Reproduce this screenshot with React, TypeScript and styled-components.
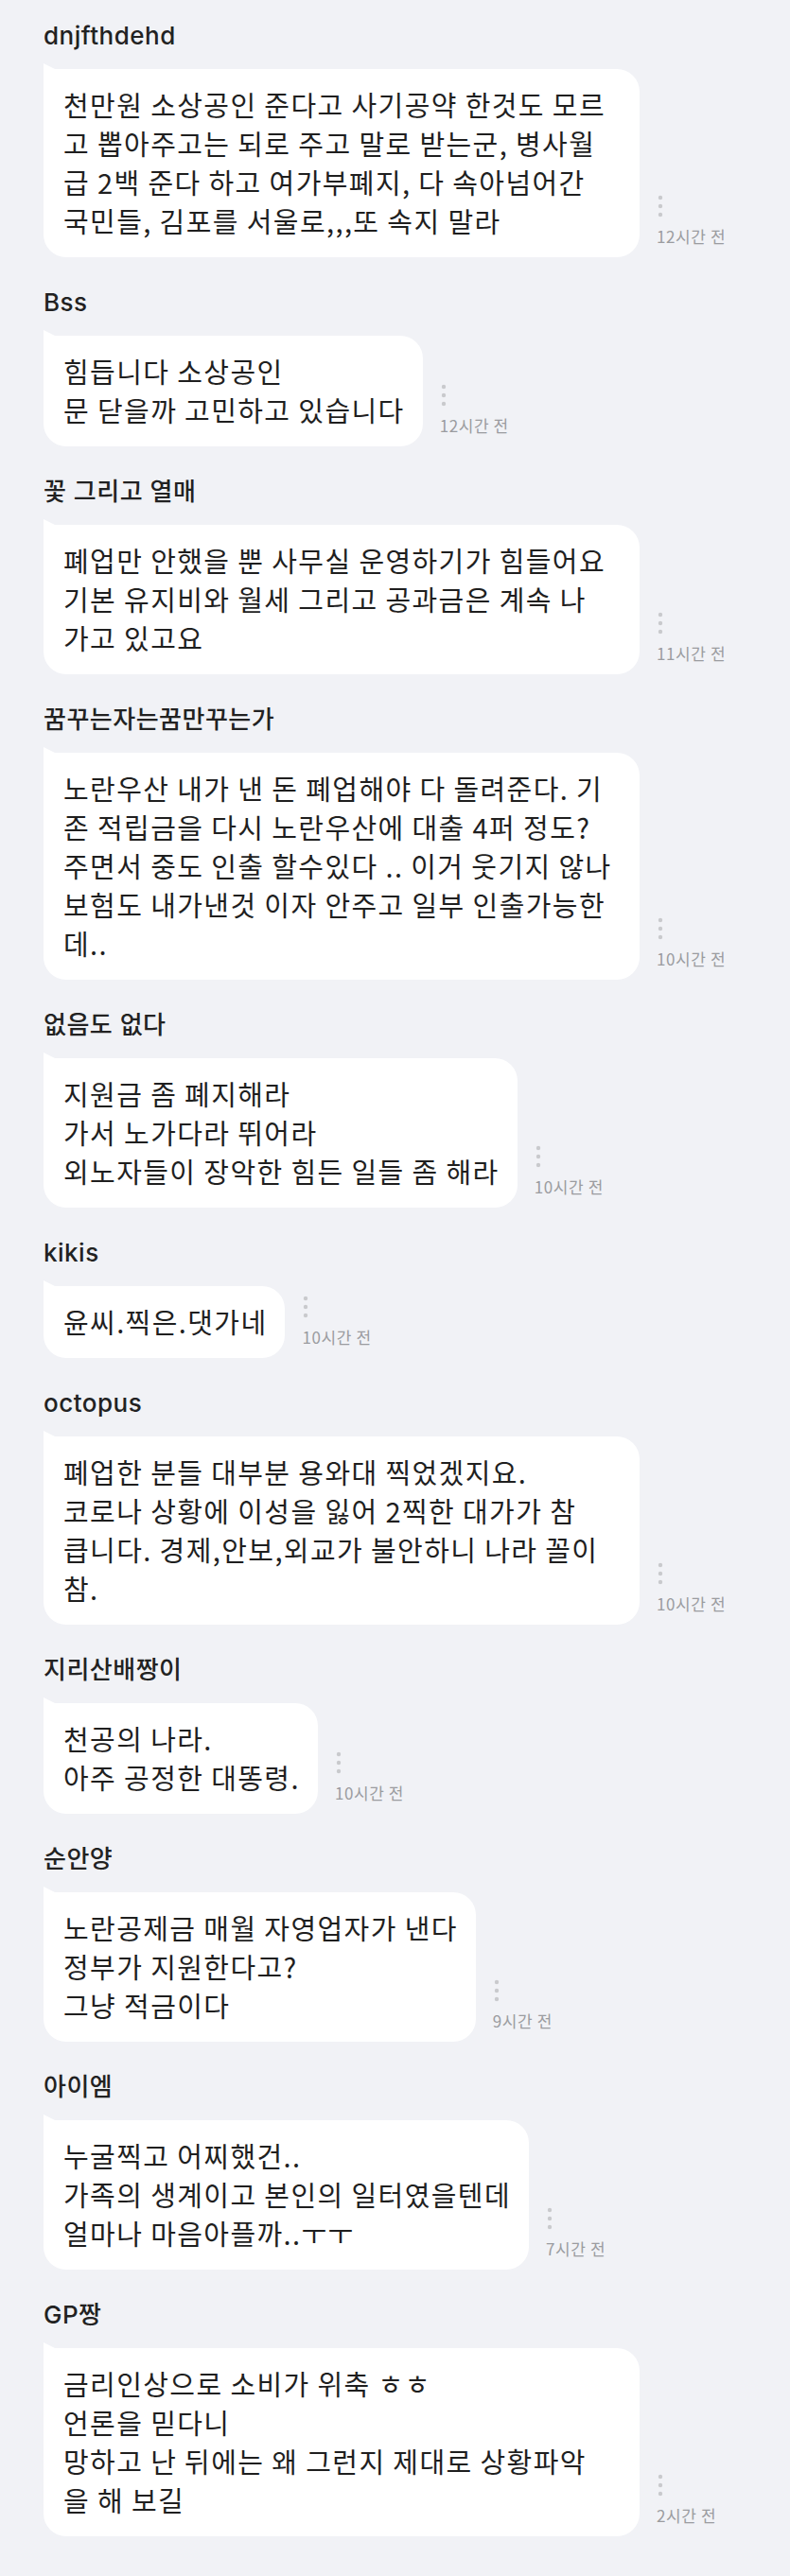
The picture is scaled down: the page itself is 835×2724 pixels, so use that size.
import styled, { createGlobalStyle } from "styled-components";

const GlobalStyle = createGlobalStyle`
  html, body {
    margin: 0;
    padding: 0;
    background: #f1f2f6;
  }
  body {
    font-family: "Noto Sans CJK KR", "Noto Sans", sans-serif;
    color: #222;
  }
`;

type Comment = {
  name: string;
  lines: string[];
  time: string;
  full?: boolean;
};

const comments: Comment[] = [
  {
    name: "dnjfthdehd",
    lines: [
      "천만원 소상공인 준다고 사기공약 한것도 모르",
      "고 뽑아주고는 되로 주고 말로 받는군, 병사월",
      "급 2백 준다 하고 여가부폐지, 다 속아넘어간",
      "국민들, 김포를 서울로,,,또 속지 말라",
    ],
    time: "12시간 전",
    full: true,
  },
  {
    name: "Bss",
    lines: ["힘듭니다 소상공인", "문 닫을까 고민하고 있습니다"],
    time: "12시간 전",
  },
  {
    name: "꽃 그리고 열매",
    lines: [
      "폐업만 안했을 뿐 사무실 운영하기가 힘들어요",
      "기본 유지비와 월세 그리고 공과금은 계속 나",
      "가고 있고요",
    ],
    time: "11시간 전",
    full: true,
  },
  {
    name: "꿈꾸는자는꿈만꾸는가",
    lines: [
      "노란우산 내가 낸 돈 폐업해야 다 돌려준다. 기",
      "존 적립금을 다시 노란우산에 대출 4퍼 정도?",
      "주면서 중도 인출 할수있다 .. 이거 웃기지 않나",
      "보험도 내가낸것 이자 안주고 일부 인출가능한",
      "데..",
    ],
    time: "10시간 전",
    full: true,
  },
  {
    name: "없음도 없다",
    lines: [
      "지원금 좀 폐지해라",
      "가서 노가다라 뛰어라",
      "외노자들이 장악한 힘든 일들 좀 해라",
    ],
    time: "10시간 전",
  },
  {
    name: "kikis",
    lines: ["윤씨.찍은.댓가네"],
    time: "10시간 전",
  },
  {
    name: "octopus",
    lines: [
      "폐업한 분들 대부분 용와대 찍었겠지요.",
      "코로나 상황에 이성을 잃어 2찍한 대가가 참",
      "큽니다. 경제,안보,외교가 불안하니 나라 꼴이",
      "참.",
    ],
    time: "10시간 전",
    full: true,
  },
  {
    name: "지리산배짱이",
    lines: ["천공의 나라.", "아주 공정한 대똥령."],
    time: "10시간 전",
  },
  {
    name: "순안양",
    lines: ["노란공제금 매월 자영업자가 낸다", "정부가 지원한다고?", "그냥 적금이다"],
    time: "9시간 전",
  },
  {
    name: "아이엠",
    lines: [
      "누굴찍고 어찌했건..",
      "가족의 생계이고 본인의 일터였을텐데",
      "얼마나 마음아플까..ㅜㅜ",
    ],
    time: "7시간 전",
  },
  {
    name: "GP짱",
    lines: [
      "금리인상으로 소비가 위축 ㅎㅎ",
      "언론을 믿다니",
      "망하고 난 뒤에는 왜 그런지 제대로 상황파악",
      "을 해 보길",
    ],
    time: "2시간 전",
    full: true,
  },
];

const MoreIcon = () => (
  <svg width="6" height="24" viewBox="0 0 6 24">
    <circle cx="3" cy="3" r="2.2" fill="#c9cacd" />
    <circle cx="3" cy="12" r="2.2" fill="#c9cacd" />
    <circle cx="3" cy="21" r="2.2" fill="#c9cacd" />
  </svg>
);

export default function App() {
  return (
    <>
      <GlobalStyle />
      <Page>
        <CommentList>
          {comments.map((c, i) => (
            <CommentItem key={i}>
              <Author>{c.name}</Author>
              <Row>
                <Bubble $full={c.full}>
                  {c.lines.map((l, j) => (
                    <Line key={j}>{l}</Line>
                  ))}
                </Bubble>
                <Side>
                  <MoreButton>
                    <MoreIcon />
                  </MoreButton>
                  <Time>{c.time}</Time>
                </Side>
              </Row>
            </CommentItem>
          ))}
        </CommentList>
      </Page>
    </>
  );
}

const Page = styled.div`
  min-height: 2724px;
  box-sizing: border-box;
  padding: 22px 0 42px 46px;
  background: #f1f2f6;
`;

const CommentList = styled.ul`
  list-style: none;
  margin: 0;
  padding: 0;
  display: flex;
  flex-direction: column;
  gap: 32px;
`;

const CommentItem = styled.li`
  display: flex;
  flex-direction: column;
  gap: 19px;
`;

const Author = styled.div`
  font-family: "Inter", "Noto Sans CJK KR", sans-serif;
  font-size: 26px;
  line-height: 32px;
  font-weight: 500;
  color: #222;
  letter-spacing: 0.5px;
`;

const Row = styled.div`
  display: flex;
  align-items: flex-end;
`;

const Bubble = styled.div<{ $full?: boolean }>`
  position: relative;
  box-sizing: border-box;
  width: ${(p) => (p.$full ? "630px" : "auto")};
  max-width: 630px;
  padding: 17px 19px 18px 21px;
  background: #fff;
  border-radius: 0 24px 24px 24px;
  font-size: 29px;
  line-height: 41px;
  letter-spacing: 1.4px;
  color: #1f1f1f;

  &::before {
    content: "";
    position: absolute;
    left: 0;
    top: -6px;
    width: 14px;
    height: 7px;
    background: #fff;
    clip-path: polygon(0 0, 100% 100%, 0 100%);
  }
`;

const Line = styled.div`
  white-space: pre;
`;

const Side = styled.div`
  display: flex;
  flex-direction: column;
  align-items: flex-start;
  gap: 10px;
  margin-left: 18px;
  padding-bottom: 12px;
`;

const MoreButton = styled.span`
  display: flex;
  margin-left: 1px;
`;

const Time = styled.span`
  font-size: 17px;
  line-height: 20px;
  letter-spacing: 0.6px;
  color: #9b9ca0;
  white-space: nowrap;
`;
